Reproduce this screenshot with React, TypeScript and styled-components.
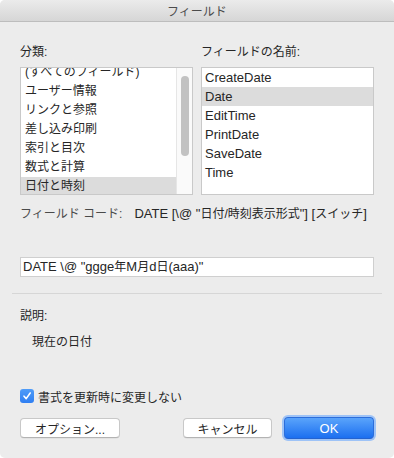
import styled, { createGlobalStyle } from "styled-components";

const GlobalStyle = createGlobalStyle`
  html, body {
    margin: 0;
    padding: 0;
    background: #ffffff;
  }
  body {
    font-family: "Liberation Sans", "Noto Sans CJK JP", sans-serif;
    color: #262626;
  }
`;

const Window = styled.div`
  width: 394px;
  height: 458px;
  background-color: #ececec;
  border-radius: 5px;
  overflow: hidden;
  display: flex;
  flex-direction: column;
`;

const TitleBar = styled.div`
  height: 21px;
  border-bottom: 1px solid #bdbdbd;
  background: linear-gradient(#ebebeb, #d6d6d6);
  display: flex;
  align-items: center;
  justify-content: center;
  font-size: 12px;
  color: #4b4b4b;
`;

const Content = styled.div`
  padding: 22px 20px 0;
  display: flex;
  flex-direction: column;
`;

const Columns = styled.div`
  display: grid;
  grid-template-columns: 173px 173px;
  column-gap: 8px;
`;

const Label = styled.div<{ indent?: number }>`
  font-size: 12px;
  line-height: 16px;
  height: 16px;
  padding-left: ${({ indent }) => indent || 0}px;
`;

const ListBox = styled.div`
  margin-top: 7px;
  height: 126px;
  border: 1px solid #c9c9c9;
  background: #ffffff;
  display: flex;
  overflow: hidden;
`;

// offset = how far the list is scrolled
const Items = styled.ul<{ offset?: number }>`
  flex: 1;
  list-style: none;
  margin: ${({ offset }) => -(offset || 0)}px 0 0;
  padding: 0;
`;

const Item = styled.li<{ selected?: boolean; latin?: boolean }>`
  height: 19px;
  line-height: 19px;
  padding-left: ${({ latin }) => (latin ? 3 : 4)}px;
  font-size: ${({ latin }) => (latin ? 13 : 12)}px;
  background: ${({ selected }) => (selected ? "#dcdcdc" : "transparent")};
  white-space: nowrap;
`;

const ScrollTrack = styled.div`
  width: 15px;
  border-left: 1px solid #e6e6e6;
  background: #fafafa;
  display: flex;
  justify-content: center;
`;

const ScrollThumb = styled.div`
  margin-top: 8px;
  width: 8px;
  height: 80px;
  border-radius: 4px;
  background: #c2c2c2;
`;

const FieldCode = styled.div`
  margin-top: 11px;
  height: 16px;
  line-height: 16px;
  font-size: 13px;
  white-space: nowrap;
  display: flex;
  gap: 12px;
`;

const CodeLabel = styled.span`
  font-size: 12px;
  color: #4a4a4a;
`;

const Jp = styled.span`
  font-size: 12px;
`;

const Input = styled.div`
  margin-top: 35px;
  height: 18px;
  border: 1px solid #cfcfcf;
  background: #ffffff;
  line-height: 18px;
  font-size: 13px;
  padding-left: 2px;
  white-space: nowrap;
`;

const Separator = styled.div`
  margin: 16px -8px 0;
  height: 1px;
  background: #d6d6d6;
`;

const CheckRow = styled.label`
  margin-top: 38px;
  height: 16px;
  display: flex;
  align-items: center;
  gap: 4px;
  font-size: 12px;
`;

const CheckBox = styled.span`
  width: 14px;
  height: 14px;
  border-radius: 3px;
  background: linear-gradient(#4f9cf8, #2f7ff2);
  display: flex;
  align-items: center;
  justify-content: center;
`;

const ButtonRow = styled.div`
  margin-top: 13px;
  display: flex;
  align-items: center;
`;

const Button = styled.button<{ width: number; primary?: boolean }>`
  width: ${({ width }) => width}px;
  height: ${({ primary }) => (primary ? 22 : 20)}px;
  margin: 0;
  padding: 0;
  border-radius: 4px;
  font-family: "Liberation Sans", "Noto Sans CJK JP", sans-serif;
  font-size: ${({ primary }) => (primary ? 13 : 12)}px;
  color: ${({ primary }) => (primary ? "#ffffff" : "#262626")};
  background: ${({ primary }) =>
    primary ? "linear-gradient(#5aa4fb, #1c6ff0)" : "#ffffff"};
  border: 1px solid ${({ primary }) => (primary ? "#2c6edb" : "#c8c8c8")};
  border-bottom-color: ${({ primary }) => (primary ? "#2563cf" : "#b3b3b3")};
  box-shadow: ${({ primary }) =>
    primary ? "0 0 0 2px #9ec3f7" : "0 0.5px 0.5px rgba(0,0,0,0.08)"};
`;

const Spacer = styled.div`
  flex: 1;
`;

const categories = [
  "(すべてのフィールド)",
  "ユーザー情報",
  "リンクと参照",
  "差し込み印刷",
  "索引と目次",
  "数式と計算",
  "日付と時刻",
];

const fields = ["CreateDate", "Date", "EditTime", "PrintDate", "SaveDate", "Time"];

const App = () => {
  return (
    <>
      <GlobalStyle />
      <Window>
        <TitleBar>フィールド</TitleBar>
        <Content>
          <Columns>
            <div>
              <Label>分類:</Label>
              <ListBox>
                <Items offset={5}>
                  {categories.map((c) => (
                    <Item key={c} selected={c === "日付と時刻"}>
                      {c}
                    </Item>
                  ))}
                </Items>
                <ScrollTrack>
                  <ScrollThumb />
                </ScrollTrack>
              </ListBox>
            </div>
            <div>
              <Label>フィールドの名前:</Label>
              <ListBox>
                <Items>
                  {fields.map((f) => (
                    <Item key={f} latin selected={f === "Date"}>
                      {f}
                    </Item>
                  ))}
                </Items>
              </ListBox>
            </div>
          </Columns>
          <FieldCode>
            <CodeLabel>フィールド コード:</CodeLabel>
            <span>
              DATE [\@ "<Jp>日付/時刻表示形式</Jp>"] [<Jp>スイッチ</Jp>]
            </span>
          </FieldCode>
          <Input>
            DATE \@ "ggge<Jp>年</Jp>M<Jp>月</Jp>d<Jp>日</Jp>(aaa)"
          </Input>
          <Separator />
          <Label style={{ marginTop: 14 }}>説明:</Label>
          <Label indent={12} style={{ marginTop: 10 }}>
            現在の日付
          </Label>
          <CheckRow>
            <CheckBox>
              <svg width="10" height="10" viewBox="0 0 10 10">
                <path
                  d="M2 5.2 L4.2 7.6 L8.2 2"
                  fill="none"
                  stroke="#ffffff"
                  strokeWidth="1.6"
                  strokeLinecap="round"
                  strokeLinejoin="round"
                />
              </svg>
            </CheckBox>
            書式を更新時に変更しない
          </CheckRow>
          <ButtonRow>
            <Button width={100}>オプション...</Button>
            <Spacer />
            <Button width={89}>キャンセル</Button>
            <Button width={90} primary style={{ marginLeft: 12 }}>
              OK
            </Button>
          </ButtonRow>
        </Content>
      </Window>
    </>
  );
};

export default App;
